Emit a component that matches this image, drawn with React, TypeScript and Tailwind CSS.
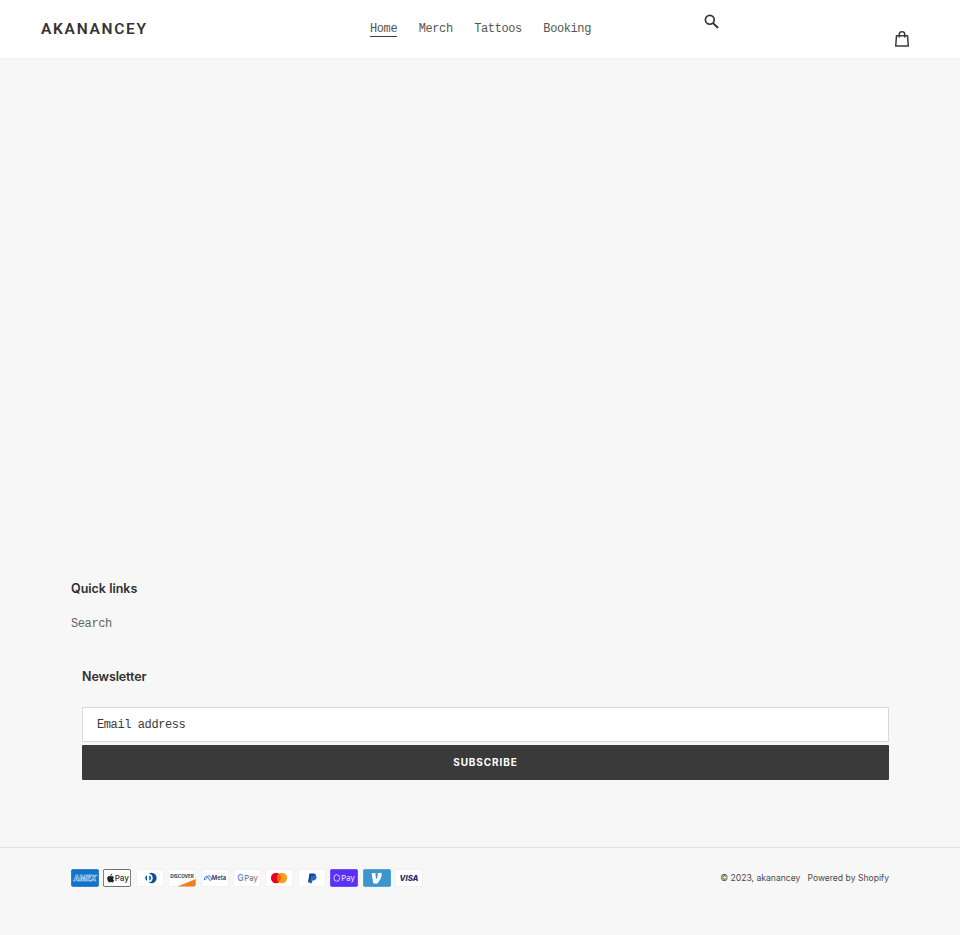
import React from 'react';

const mono = "font-['Liberation_Mono','DejaVu_Sans_Mono',monospace]";

const Card: React.FC<{ bg?: string; border?: string; children: React.ReactNode }> = ({ bg = '#fff', border = '#ececec', children }) => (
  <svg width="28" height="18" viewBox="0 0 38 24" className="block shrink-0">
    <rect x="0.5" y="0.5" width="37" height="23" rx="2" fill={bg} stroke={border} />
    {children}
  </svg>
);

const label = { fontFamily: 'Inter, sans-serif' };

const PaymentIcons = () => (
  <div className="flex gap-[4.4px]">
    {/* Amex */}
    <Card bg="#1273c8" border="#1273c8">
      <text x="19" y="15.700" textAnchor="middle" fontSize="10" fontWeight="800" fontStyle="italic" fill="#1273c8" stroke="#d7eafb" strokeWidth="0.700" style={label}>AMEX</text>
    </Card>
    {/* Apple Pay */}
    <Card border="#3a3a3a">
      <path d="M11.600 8.300c.5-.6 1.100-1.300 1-2-.7 0-1.500.5-1.900 1-.4.5-.8 1.200-.7 1.900.7.1 1.200-.3 1.600-.9zm1 .9c-.9-.1-1.700.5-2.100.5-.5 0-1.100-.5-1.900-.5-1 0-1.900.6-2.400 1.500-1 1.800-.3 4.400.7 5.800.5.700 1 1.500 1.800 1.500.7 0 1-.500 1.900-.500s1.100.500 1.900.500 1.300-.700 1.800-1.400c.4-.600.500-.900.800-1.500-1.300-.500-1.900-2.600-.300-3.900-.500-.600-1.200-1.500-2.200-1.500z" fill="#222" />
      <text x="25.500" y="16.500" textAnchor="middle" fontSize="11" fontWeight="500" fill="#333" style={label}>Pay</text>
    </Card>
    {/* Diners */}
    <Card>
      <circle cx="21" cy="12" r="7" fill="#0a5296" />
      <circle cx="16.500" cy="12" r="6.200" fill="#fff" />
      <path d="M15 8.200a4.200 4.200 0 0 0 0 7.600zM18 8.200v7.600a4.200 4.200 0 0 0 0-7.600z" fill="#0a5296" />
    </Card>
    {/* Discover */}
    <Card>
      <path d="M13 23.400 37.500 13.500v7.500a2.400 2.400 0 0 1-2.400 2.400z" fill="#ee7f22" />
      <text x="19" y="12" textAnchor="middle" fontSize="6.200" fontWeight="700" fill="#333" style={label}>DISCOVER</text>
    </Card>
    {/* Meta */}
    <Card>
      <path d="M4.500 15c0-3 1.200-5.500 2.900-5.500 2.300 0 3.400 6 5.300 6 .9 0 1.300-.8 1.300-1.900 0-2.600-2.100-5-3.700-4.400-1.500.6-3.400 3.900-4.100 5.300" fill="none" stroke="#1266d6" strokeWidth="1.200" />
      <text x="24.500" y="15" textAnchor="middle" fontSize="8" fontWeight="600" fill="#333" style={label}>Meta</text>
    </Card>
    {/* Google Pay */}
    <Card>
      <text x="10" y="16.200" textAnchor="middle" fontSize="11.500" fontWeight="600" fill="#5b8def" style={label}>G</text>
      <text x="24.500" y="16" textAnchor="middle" fontSize="10.500" fontWeight="400" fill="#666" style={label}>Pay</text>
    </Card>
    {/* Mastercard */}
    <Card>
      <circle cx="15" cy="12" r="7" fill="#eb001b" />
      <circle cx="23" cy="12" r="7" fill="#f79e1b" />
      <path d="M19 6.300a7 7 0 0 1 0 11.400 7 7 0 0 1 0-11.400z" fill="#ff5f00" />
    </Card>
    {/* PayPal */}
    <Card>
      <path d="M15.500 6h5.300c2.800 0 3.900 1.500 3.400 3.800-.6 2.600-2.300 3.900-4.800 3.900h-1.500l-.8 4.300h-3.500z" fill="#1d3a8a" />
      <path d="M17.500 8.500h4.800c2.400 0 3.200 1.100 2.800 3.200-.5 2.400-2 3.600-4.200 3.600h-1.300l-.7 3.700h-2.600z" fill="#1f6fc0" />
    </Card>
    {/* Shop Pay */}
    <Card bg="#5a31f4" border="#5a31f4">
      <rect x="5.500" y="7.500" width="7.500" height="9" rx="3.700" fill="none" stroke="#e8e2ff" strokeWidth="1.200" />
      <text x="24.500" y="16" textAnchor="middle" fontSize="10.500" fontWeight="400" fill="#f1eeff" style={label}>Pay</text>
    </Card>
    {/* Venmo */}
    <Card bg="#3d95ce" border="#3d95ce">
      <path d="M24.500 6.500c.5.900.8 1.800.8 3 0 3.600-3.100 8.200-5.600 11.500h-5.700L11.700 7.100l5-.5 1.100 8.900c1-1.700 2.300-4.300 2.300-6.100 0-1-.2-1.700-.4-2.200z" fill="#fff" transform="translate(0 -1.500)" />
    </Card>
    {/* Visa */}
    <Card>
      <text x="19" y="16.500" textAnchor="middle" fontSize="10.500" fontWeight="800" fontStyle="italic" fill="#1f2f6f" style={label}>VISA</text>
    </Card>
  </div>
);

export default function App() {
  return (
    <div className="min-h-[935px] flex flex-col bg-[#f7f7f7] text-[#3a3a3a]">
      {/* Header */}
      <header className="h-[59px] bg-white border-b border-[#f1f1f1] pl-[41px] pr-[51px] flex items-start">
        <a className="w-[329px] shrink-0 mt-[19px] text-[15.500px] leading-5 font-semibold tracking-[0.11em] font-['Roboto',sans-serif] text-[#333]">AKANANCEY</a>
        <nav className={`${mono} mt-[22px] flex gap-[21.500px] text-[12px] tracking-[-0.4px] leading-[14px] text-[#555]`}>
          <a className="border-b border-[#3a3a3a]">Home</a>
          <a>Merch</a>
          <a>Tattoos</a>
          <a>Booking</a>
        </nav>
        <svg width="15" height="15" viewBox="0 0 16 16" className="ml-[113px] mt-[14px] shrink-0" fill="none" stroke="#333" strokeWidth="1.800">
          <circle cx="6.200" cy="6.200" r="4.700" />
          <path d="M9.700 9.700 15 15" strokeWidth="2.100" />
        </svg>
        <svg width="14" height="16" viewBox="0 0 14 16" className="ml-auto mt-[31px] shrink-0" fill="none" stroke="#3a3a3a" strokeWidth="1.500">
          <path d="M1.500 4.700h11l.8 10.400H.7z" strokeLinejoin="round" />
          <path d="M4.300 6.500V3a2.700 2.200 0 0 1 5.400 0v3.500" />
        </svg>
      </header>

      <main className="h-[501px]" />

      {/* Footer */}
      <footer className="flex-1 flex flex-col">
        <div className="pl-[71px] pr-[71px] pt-[21px]">
          <h2 className="text-[12.500px] leading-4 font-semibold font-['Inter',sans-serif] text-[#2f2f2f]">Quick links</h2>
          <a className={`${mono} block mt-[19px] text-[12px] tracking-[-0.4px] leading-4 text-[#666]`}>Search</a>
          <div className="mt-[37px] pl-[11px]">
            <h2 className="text-[12.500px] tracking-[-0.1px] leading-4 font-semibold font-['Inter',sans-serif] text-[#2f2f2f]">Newsletter</h2>
            <div className={`${mono} mt-[22px] h-[35px] bg-white border border-[#d9d9d9] px-[14px] flex items-center text-[12px] tracking-[-0.4px] text-[#3a3a3a]`}>Email address</div>
            <button className="mt-[3px] w-full h-[35px] bg-[#3a3a3a] rounded-[1px] text-white text-[10px] font-bold tracking-[0.09em] font-['Inter',sans-serif]">SUBSCRIBE</button>
          </div>
        </div>
        <div className="mt-[67px] border-t border-[#e3e3e3] px-[71px] pt-[21px] flex items-start justify-between">
          <PaymentIcons />
          <p className="mt-[3px] flex gap-[7px] text-[8.600px] leading-3 text-[#4a4a4a] font-['Inter',sans-serif]">
            <span>© 2023, akanancey</span>
            <span>Powered by Shopify</span>
          </p>
        </div>
      </footer>
    </div>
  );
}
